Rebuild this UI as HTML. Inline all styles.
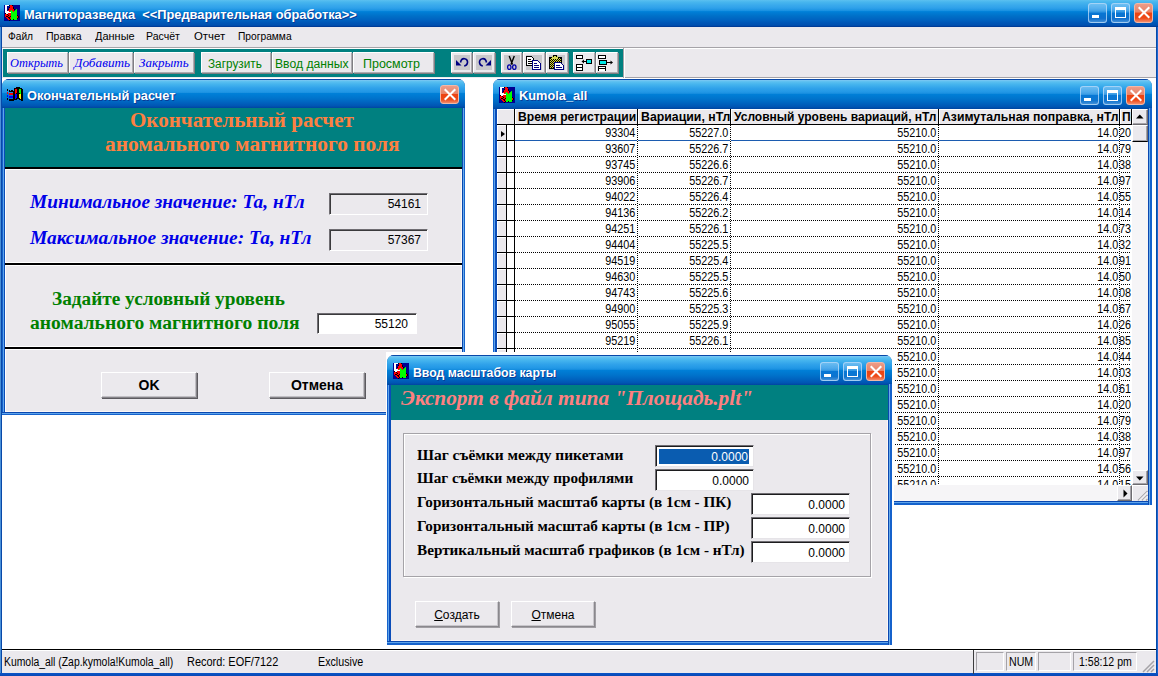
<!DOCTYPE html>
<html lang="ru">
<head>
<meta charset="utf-8">
<title>Магниторазведка</title>
<style>
*{box-sizing:border-box;margin:0;padding:0}
html,body{width:1158px;height:676px;overflow:hidden;background:#fff}
body{position:relative;font-family:"Liberation Sans",sans-serif;font-size:11px;color:#000}
.abs{position:absolute}
.tb{position:absolute;background:linear-gradient(#0848a8 0,#0848a8 3.300%,#7cc8f4 3.400%,#6cc4f2 6.600%,#5bc0f0 9%,#45b4ee 18%,#30a2ea 31%,#2298e6 43%,#1a90e0 48%,#0080d8 50%,#0074cc 66%,#0064c0 80%,#0056b4 92%,#004ca8 97%,#0044a0 100%)}
.tb.main{background:linear-gradient(#5bc0f0 0,#48b6ee 7.400%,#3aaaec 18.500%,#2ea0ea 30%,#1a92e2 39%,#0080d8 43%,#0070c8 59%,#0062c0 74%,#0056b6 85%,#0050b0 94%,#003c98 96.500%,#003c98 100%)}
.cap{position:absolute;color:#fff;font-weight:bold;font-size:13px;white-space:nowrap;text-shadow:1px 1px 0 #0a3c96;transform-origin:0 0;line-height:16px}
.wbtn{position:absolute;width:19px;height:19px;border:1px solid rgba(190,222,250,.75);border-radius:3px;background:linear-gradient(rgba(150,205,245,.55) 0,rgba(110,180,240,.45) 45%,rgba(20,110,215,.35) 50%,rgba(40,130,225,.35) 80%,rgba(120,185,240,.55) 100%)}
.wbtn.x{background:linear-gradient(#ec9c88 0,#e88468 45%,#ec4312 50%,#ee4a18 78%,#f28a6a 100%);border-color:#f3b8a6}
.wbtn.min:after{content:"";position:absolute;left:3px;top:11px;width:7px;height:3px;background:#fff}
.wbtn.max:after{content:"";box-sizing:border-box;position:absolute;left:3px;top:3px;width:11px;height:11px;border:1px solid #fff;border-top-width:3px}
.wbtn.x:before,.wbtn.x:after{content:"";position:absolute;left:7.500px;top:1px;width:2px;height:15px;background:#fff;transform:rotate(45deg)}
.wbtn.x:after{transform:rotate(-45deg)}
.gray{background:#ebe9ed}
#menu span{position:absolute;top:0;transform-origin:0 0;line-height:19px;font-size:11px;white-space:nowrap}

.tbtn{position:absolute;top:3px;height:21px;background:#ebe9ed;border-top:1px solid #fff;border-left:1px solid #fff;border-right:1px solid #aeacb1;border-bottom:1px solid #aeacb1;box-shadow:1px 1px 0 #807e83;white-space:nowrap;text-align:center;line-height:19px}
.tbtn.it{font-family:"Liberation Serif",serif;font-style:italic;font-size:13px;color:#0000f0}
.tbtn.gr{font-size:12px;color:#008000}
.tbtn i{position:absolute;left:2px;top:2px;width:16px;height:15px;background:#c9c8cb}
.tbtn svg{position:absolute;left:2px;top:1px}

.win{position:absolute;background:#0850b0;border-radius:7px 7px 0 0}
.win:before{content:"";position:absolute;left:0;top:29px;bottom:0;width:3px;background:linear-gradient(90deg,#1562cc 0 1px,#5fa4ea 1px 2px,#0a4cb8 2px 3px)}
.win:after{content:"";position:absolute;right:0;top:29px;bottom:0;width:3px;background:linear-gradient(90deg,#0a48b0 0 1px,#68abea 1px 2px,#1562cc 2px 3px)}
.win .bb{position:absolute;left:0;right:0;bottom:0;height:3px;background:linear-gradient(#0a48b0 0 1px,#5fa4ea 1px 2px,#1562cc 2px 3px)}
.win.w4:before{width:4px;background:linear-gradient(90deg,#1562cc 0 1px,#5fa4ea 1px 2.500px,#0a4cb8 2.500px 4px)}
.win.w4:after{width:4px;background:linear-gradient(90deg,#0a48b0 0 1px,#68abea 1px 2.500px,#1562cc 2.500px 4px)}
.win.w4 .bb{height:4px;background:linear-gradient(#0a48b0 0 1px,#5fa4ea 1px 2.500px,#1562cc 2.500px 4px)}
.win .tb{left:0;top:0;right:0;width:auto;border-radius:7px 7px 0 0}
.hl{position:absolute;left:0;width:457px;height:4px;background:#000;border-top:1px solid #fff;border-bottom:1px solid #fff}
.ser{font-family:"Liberation Serif",serif;font-weight:bold;position:absolute;white-space:nowrap;transform-origin:0 0}
.fld{position:absolute;border:1px solid;border-color:#6f6d72 #fff #fff #6f6d72;box-shadow:inset 1px 1px 0 #3a3a3c;font-size:12px;text-align:right;line-height:20px;padding-right:6px}
.pbtn{position:absolute;background:#ebe9ed;border:1px solid;border-color:#fff #858388 #858388 #fff;box-shadow:inset -1px -1px 0 #c0bec3,1px 1px 0 #5c5a5f;text-align:center;white-space:nowrap}

#grid{position:absolute;left:4px;top:30px;width:651px;height:392px;background:#fff;overflow:hidden}
#grid .hd{position:absolute;top:0;height:15px;background:#ebe9ed;border-top:1px solid #fff;border-left:1px solid #fff;font-weight:bold;font-size:12px;line-height:14px;white-space:nowrap;overflow:hidden}
#grid .hd span{display:inline-block;transform-origin:0 0;padding-left:2px}
#grid .vl{position:absolute;top:0;width:1px;height:15px;background:#000}
#grid .dv{position:absolute;top:16px;width:1px;height:361px;background:repeating-linear-gradient(#000 0 1px,#fff 1px 2px)}
#grid .r{position:absolute;left:18px;width:616px;height:16px;background:repeating-linear-gradient(90deg,#000 0 1px,#fff 1px 2px) left bottom/100% 1px no-repeat}
#grid .r b{position:absolute;top:0;font-weight:normal;font-size:12px;line-height:16px;text-align:right;white-space:nowrap;transform:scaleX(.9);transform-origin:100% 0}
#grid .sel{position:absolute;left:0;width:9px;height:15px;background:#ebe9ed;border-top:1px solid #fff;border-left:1px solid #fff}
.sb{position:absolute;background:#ebe9ed;border:1px solid;border-color:#fff #6d6b70 #6d6b70 #fff;box-shadow:inset -1px -1px 0 #a5a3a8}
.trk{position:absolute;background:#f6f5f7}

.lb{position:absolute;font-family:"Liberation Serif",serif;font-weight:bold;font-size:15.200px;line-height:18px;white-space:nowrap;transform-origin:0 0}
.ef{position:absolute;width:99px;height:22px;background:#fff;border:1px solid;border-color:#6f6d72 #e6e4e8 #e6e4e8 #6f6d72;box-shadow:inset 1px 1px 0 #1c1c1e;font-size:12px;text-align:right;line-height:23px;padding-right:4px}
.sp{position:absolute;top:1px;height:19px;border:1px solid;border-color:#a5a3a8 #fff #fff #a5a3a8}
#status span{position:absolute;top:4px;font-size:12px;line-height:15px;white-space:nowrap;transform-origin:0 0}
.pbtn.sm{border-color:#fff #8a888d #8a888d #fff;box-shadow:inset -1px -1px 0 #c8c6cb,1px 1px 0 #a09ea3}
</style>
</head>
<body>

<!-- ============ MAIN WINDOW FRAME ============ -->
<div class="tb main" style="left:0;top:0;width:1158px;height:27px"></div>
<div class="abs" style="left:0;top:27px;width:2px;height:649px;background:linear-gradient(90deg,#4a90d8 0 1px,#0848a8 1px 2px)"></div>
<div class="abs" style="left:1156px;top:27px;width:2px;height:649px;background:linear-gradient(90deg,#0848a8 0 1px,#1a68d0 1px 2px)"></div>
<div class="abs" style="left:0;top:673px;width:1158px;height:3px;background:linear-gradient(#0a55c8,#0a48b4)"></div>
<div id="mainicon" class="abs" style="left:4px;top:5px;width:16px;height:16px"><svg width="16" height="16" viewBox="0 0 16 16" shape-rendering="crispEdges" style="display:block"><rect width="16" height="16" fill="#000090"/><rect x="1" y="0" width="4" height="1" fill="#fff"/><rect x="5" y="0" width="1" height="1" fill="#000"/><rect x="6" y="0" width="2" height="1" fill="#f00"/><rect x="8" y="0" width="1" height="1" fill="#000"/><rect x="1" y="1" width="2" height="1" fill="#fff"/><rect x="6" y="1" width="3" height="1" fill="#f00"/><rect x="1" y="2" width="2" height="1" fill="#fff"/><rect x="5" y="2" width="1" height="1" fill="#000"/><rect x="6" y="2" width="3" height="1" fill="#f00"/><rect x="9" y="2" width="1" height="1" fill="#000"/><rect x="1" y="3" width="2" height="1" fill="#fff"/><rect x="5" y="3" width="4" height="1" fill="#f00"/><rect x="9" y="3" width="1" height="1" fill="#000"/><rect x="1" y="4" width="2" height="1" fill="#fff"/><rect x="4" y="4" width="1" height="1" fill="#000"/><rect x="5" y="4" width="5" height="1" fill="#f00"/><rect x="10" y="4" width="1" height="1" fill="#000"/><rect x="12" y="4" width="1" height="1" fill="#0f0"/><rect x="1" y="5" width="2" height="1" fill="#fff"/><rect x="4" y="5" width="3" height="1" fill="#f00"/><rect x="7" y="5" width="1" height="1" fill="#0f0"/><rect x="8" y="5" width="2" height="1" fill="#f00"/><rect x="11" y="5" width="2" height="1" fill="#0f0"/><rect x="1" y="6" width="4" height="1" fill="#fff"/><rect x="5" y="6" width="1" height="1" fill="#f00"/><rect x="6" y="6" width="3" height="1" fill="#0f0"/><rect x="9" y="6" width="1" height="1" fill="#f00"/><rect x="10" y="6" width="3" height="1" fill="#0f0"/><rect x="1" y="7" width="6" height="1" fill="#fff"/><rect x="7" y="7" width="6" height="1" fill="#0f0"/><rect x="1" y="8" width="1" height="1" fill="#000"/><rect x="2" y="8" width="2" height="1" fill="#fff"/><rect x="4" y="8" width="3" height="1" fill="#f00"/><rect x="7" y="8" width="6" height="1" fill="#0f0"/><rect x="1" y="9" width="2" height="1" fill="#f00"/><rect x="3" y="9" width="1" height="1" fill="#000"/><rect x="4" y="9" width="3" height="1" fill="#f00"/><rect x="7" y="9" width="6" height="1" fill="#0f0"/><rect x="1" y="10" width="3" height="1" fill="#f00"/><rect x="4" y="10" width="1" height="1" fill="#000"/><rect x="5" y="10" width="2" height="1" fill="#f00"/><rect x="7" y="10" width="6" height="1" fill="#0f0"/><rect x="13" y="10" width="1" height="1" fill="#000"/><rect x="1" y="11" width="1" height="1" fill="#f00"/><rect x="2" y="11" width="2" height="1" fill="#000"/><rect x="4" y="11" width="2" height="1" fill="#f00"/><rect x="6" y="11" width="1" height="1" fill="#000"/><rect x="7" y="11" width="6" height="1" fill="#0f0"/><rect x="13" y="11" width="1" height="1" fill="#f00"/><rect x="14" y="11" width="1" height="1" fill="#000"/><rect x="2" y="12" width="2" height="1" fill="#f00"/><rect x="4" y="12" width="2" height="1" fill="#000"/><rect x="6" y="12" width="1" height="1" fill="#f00"/><rect x="7" y="12" width="6" height="1" fill="#0f0"/><rect x="13" y="12" width="1" height="1" fill="#f00"/><rect x="14" y="12" width="1" height="1" fill="#000"/><rect x="3" y="13" width="2" height="1" fill="#f00"/><rect x="5" y="13" width="1" height="1" fill="#000"/><rect x="6" y="13" width="1" height="1" fill="#f00"/><rect x="7" y="13" width="6" height="1" fill="#0f0"/><rect x="13" y="13" width="1" height="1" fill="#000"/><rect x="4" y="14" width="2" height="1" fill="#f00"/><rect x="6" y="14" width="1" height="1" fill="#000"/><rect x="7" y="14" width="2" height="1" fill="#0f0"/><rect x="9" y="14" width="1" height="1" fill="#000"/><rect x="10" y="14" width="3" height="1" fill="#0f0"/><rect x="5" y="15" width="1" height="1" fill="#000"/></svg></div>
<div class="cap" style="left:24px;top:7px;transform:scaleX(.988)" id="cap-main">Магниторазведка&nbsp; &lt;&lt;Предварительная обработка&gt;&gt;</div>
<div class="wbtn min" style="left:1088px;top:3px;height:20px" id="m-min"></div>
<div class="wbtn max" style="left:1111px;top:3px;height:20px" id="m-max"></div>
<div class="wbtn x" style="left:1134px;top:3px;height:20px" id="m-cls"></div>

<!-- menu bar -->
<div id="menu" class="abs gray" style="left:2px;top:27px;width:1154px;height:20px">
<span id="m1" style="left:6px;top:0px;transform:scaleX(0.9259);transform-origin:0 0">Файл</span><span id="m2" style="left:43.5px;top:0px;transform:scaleX(0.9600);transform-origin:0 0">Правка</span><span id="m3" style="left:93px;top:0px;transform:scaleX(0.9977);transform-origin:0 0">Данные</span><span id="m4" style="left:144.4px;top:0px;transform:scaleX(0.9604);transform-origin:0 0">Расчёт</span><span id="m5" style="left:191.7px;top:0px;transform:scaleX(1.0333);transform-origin:0 0">Отчет</span><span id="m6" style="left:235.5px;top:0px;transform:scaleX(0.9294);transform-origin:0 0">Программа</span>
</div>
<div class="abs" style="left:2px;top:47px;width:1154px;height:1px;background:#a5a3a8"></div>
<div class="abs" style="left:2px;top:48px;width:1154px;height:1px;background:#fff"></div>
<!-- toolbar strip -->
<div class="abs gray" style="left:2px;top:49px;width:1154px;height:29px"></div>
<div id="toolbar" class="abs" style="left:3px;top:49px;width:620px;height:28px;background:#008080">
<div class="tbtn it" style="left:4px;width:61px"><span id="t1" style="position:absolute;left:1.6px;top:0px;transform:scaleX(0.9530);transform-origin:0 0">Открыть</span></div>
<div class="tbtn it" style="left:66px;width:64px"><span id="t2" style="position:absolute;left:3.5px;top:0px;transform:scaleX(1.0179);transform-origin:0 0">Добавить</span></div>
<div class="tbtn it" style="left:131px;width:60px"><span id="t3" style="position:absolute;left:4px;top:0px;transform:scaleX(0.9981);transform-origin:0 0">Закрыть</span></div>
<div class="tbtn gr" style="left:198px;width:70px"><span id="t4" style="position:absolute;left:6px;top:1.700px;transform:scaleX(0.9818);transform-origin:0 0">Загрузить</span></div>
<div class="tbtn gr" style="left:269px;width:80px"><span id="t5" style="position:absolute;left:2.1px;top:1.700px;transform:scaleX(1.0127);transform-origin:0 0">Ввод данных</span></div>
<div class="tbtn gr" style="left:350px;width:81px"><span id="t6" style="position:absolute;left:9.4px;top:1.700px;transform:scaleX(1.0407);transform-origin:0 0">Просмотр</span></div>
<div class="tbtn" style="left:448px;width:21px"><i></i><svg width="16" height="16" viewBox="0 0 16 16"><path d="M2 6v5.500h5.500z" fill="#000080"/><path d="M6.500 8.500c.5-2.500 2-4 4-3.800c2 .2 3.200 2 3 4c-.2 1.800-1.300 3-3.300 3.300" fill="none" stroke="#000080" stroke-width="1.600"/></svg></div>
<div class="tbtn" style="left:470px;width:22px"><i></i><svg style="left:3px" width="16" height="16" viewBox="0 0 16 16"><path d="M14 6v5.500h-5.500z" fill="#000080"/><path d="M9.500 8.500c-.5-2.500-2-4-4-3.800c-2 .2-3.200 2-3 4c.2 1.800 1.300 3 3.300 3.300" fill="none" stroke="#000080" stroke-width="1.600"/></svg></div>
<div class="tbtn" style="left:498px;width:21px"><i></i><svg width="16" height="16" viewBox="0 0 16 16"><path d="M5.200 2l3.300 8.500M10.300 2l-3.300 8.500" stroke="#000" stroke-width="1.400" fill="none"/><ellipse cx="5.300" cy="13.200" rx="1.700" ry="2.300" fill="none" stroke="#0000a8" stroke-width="1.300"/><ellipse cx="10.300" cy="13.200" rx="1.700" ry="2.300" fill="none" stroke="#0000a8" stroke-width="1.300"/></svg></div>
<div class="tbtn" style="left:520px;width:22px"><i></i><svg width="16" height="16" viewBox="0 0 16 16" shape-rendering="crispEdges"><path d="M0.500 2.500h5l2 2v7h-7z" fill="#fff" stroke="#000"/><path d="M2 5.500h3M2 7.500h4M2 9.500h4" stroke="#000"/><path d="M6.500 6.500h5l3 3v6h-8z" fill="#fff" stroke="#000080"/><path d="M8 9.500h3M8 11.500h5M8 13.500h5" stroke="#000080"/></svg></div>
<div class="tbtn" style="left:543px;width:22px"><i></i><svg width="16" height="16" viewBox="0 0 16 16" shape-rendering="crispEdges"><defs><pattern id="dth" width="2" height="2" patternUnits="userSpaceOnUse"><rect width="2" height="2" fill="#000"/><rect width="1" height="1" fill="#d8d838"/><rect x="1" y="1" width="1" height="1" fill="#d8d838"/></pattern></defs><rect x="0" y="3" width="13" height="12" fill="#000"/><rect x="1" y="4" width="11" height="10" fill="url(#dth)"/><rect x="3" y="2" width="6" height="3" fill="#d8d858"/><rect x="4" y="1" width="4" height="2" fill="#000"/><rect x="5" y="2" width="2" height="1" fill="#d8d858"/><path d="M5.500 8.500h6l3 3v4h-9z" fill="#fff" stroke="#000080"/><path d="M7 11.500h4M7 13.500h6" stroke="#000080"/></svg></div>
<div class="tbtn" style="left:570px;width:22px"><svg style="left:0;top:0" width="19" height="19" viewBox="0 0 19 19" shape-rendering="crispEdges"><rect x="2.500" y="2.500" width="6" height="3" fill="#fff" stroke="#000"/><rect x="2.500" y="11.500" width="6" height="6" fill="#fff" stroke="#000"/><path d="M3 14.500h5" stroke="#000"/><rect x="12.500" y="6.500" width="5" height="4" fill="#00e8e8" stroke="#000"/><path d="M9 8.500h4" stroke="#000"/><path d="M7.500 8.500l2.500-2v4z" fill="#000" shape-rendering="auto"/></svg></div>
<div class="tbtn" style="left:593px;width:22px"><svg style="left:0;top:0" width="19" height="19" viewBox="0 0 19 19" shape-rendering="crispEdges"><rect x="1.500" y="2.500" width="7" height="3" fill="#fff" stroke="#000"/><path d="M1.500 17.500v-4h7v4" fill="#fff" stroke="#000"/><path d="M2 15.500h6" stroke="#000"/><rect x="2.500" y="7.500" width="7" height="4" fill="#00e8e8" stroke="#000"/><path d="M10 9.500h4" stroke="#000"/><path d="M16 9.500l-2.500-2v4z" fill="#000" shape-rendering="auto"/></svg></div>
</div>
<div class="abs" style="left:2px;top:78px;width:1154px;height:1px;background:#fff"></div>
<div class="abs" style="left:625px;top:77px;width:531px;height:1px;background:#a5a3a8"></div>
<div class="abs" style="left:623px;top:48px;width:1px;height:30px;background:#a5a3a8"></div>
<div class="abs" style="left:624px;top:48px;width:1px;height:30px;background:#fff"></div>


<!-- ============ LEFT DIALOG: Окончательный расчет ============ -->
<div class="win" id="w1" style="left:2px;top:79px;width:463px;height:336px"><div class="bb"></div>
 <div class="tb" style="height:29px"></div>
 <div id="ic1" class="abs" style="left:5px;top:8px;width:16px;height:14px"><svg width="16" height="14" viewBox="0 0 16 14" shape-rendering="crispEdges" style="display:block"><rect x="9" y="0" width="4" height="1" fill="#000"/><rect x="7" y="1" width="8" height="1" fill="#000"/><rect x="0" y="2" width="1" height="1" fill="#000"/><rect x="7" y="2" width="1" height="1" fill="#000"/><rect x="8" y="2" width="2" height="1" fill="#f00"/><rect x="10" y="2" width="2" height="1" fill="#000"/><rect x="12" y="2" width="2" height="1" fill="#0f0"/><rect x="14" y="2" width="2" height="1" fill="#000"/><rect x="0" y="3" width="1" height="1" fill="#000"/><rect x="2" y="3" width="1" height="1" fill="#000"/><rect x="4" y="3" width="2" height="1" fill="#000"/><rect x="7" y="3" width="1" height="1" fill="#000"/><rect x="8" y="3" width="2" height="1" fill="#f00"/><rect x="10" y="3" width="2" height="1" fill="#000"/><rect x="12" y="3" width="2" height="1" fill="#0f0"/><rect x="14" y="3" width="2" height="1" fill="#000"/><rect x="2" y="4" width="6" height="1" fill="#000"/><rect x="8" y="4" width="2" height="1" fill="#f00"/><rect x="10" y="4" width="2" height="1" fill="#000"/><rect x="12" y="4" width="2" height="1" fill="#0f0"/><rect x="14" y="4" width="2" height="1" fill="#000"/><rect x="0" y="5" width="1" height="1" fill="#f00"/><rect x="6" y="5" width="2" height="1" fill="#000"/><rect x="8" y="5" width="2" height="1" fill="#f00"/><rect x="10" y="5" width="2" height="1" fill="#000"/><rect x="12" y="5" width="2" height="1" fill="#0f0"/><rect x="14" y="5" width="2" height="1" fill="#000"/><rect x="0" y="6" width="1" height="1" fill="#f00"/><rect x="2" y="6" width="4" height="1" fill="#f00"/><rect x="6" y="6" width="2" height="1" fill="#000"/><rect x="8" y="6" width="1" height="1" fill="#f00"/><rect x="9" y="6" width="4" height="1" fill="#000"/><rect x="13" y="6" width="1" height="1" fill="#0f0"/><rect x="14" y="6" width="2" height="1" fill="#000"/><rect x="2" y="7" width="4" height="1" fill="#f00"/><rect x="6" y="7" width="2" height="1" fill="#000"/><rect x="8" y="7" width="2" height="1" fill="#00f"/><rect x="10" y="7" width="2" height="1" fill="#000"/><rect x="12" y="7" width="2" height="1" fill="#ff0"/><rect x="14" y="7" width="2" height="1" fill="#000"/><rect x="0" y="8" width="1" height="1" fill="#00f"/><rect x="6" y="8" width="2" height="1" fill="#000"/><rect x="8" y="8" width="2" height="1" fill="#00f"/><rect x="10" y="8" width="2" height="1" fill="#000"/><rect x="12" y="8" width="2" height="1" fill="#ff0"/><rect x="14" y="8" width="2" height="1" fill="#000"/><rect x="0" y="9" width="1" height="1" fill="#00f"/><rect x="2" y="9" width="4" height="1" fill="#00f"/><rect x="6" y="9" width="2" height="1" fill="#000"/><rect x="8" y="9" width="2" height="1" fill="#00f"/><rect x="10" y="9" width="2" height="1" fill="#000"/><rect x="12" y="9" width="2" height="1" fill="#ff0"/><rect x="14" y="9" width="2" height="1" fill="#000"/><rect x="2" y="10" width="4" height="1" fill="#00f"/><rect x="6" y="10" width="2" height="1" fill="#000"/><rect x="8" y="10" width="2" height="1" fill="#00f"/><rect x="10" y="10" width="2" height="1" fill="#000"/><rect x="12" y="10" width="2" height="1" fill="#ff0"/><rect x="14" y="10" width="2" height="1" fill="#000"/><rect x="0" y="11" width="1" height="1" fill="#000"/><rect x="6" y="11" width="2" height="1" fill="#000"/><rect x="8" y="11" width="1" height="1" fill="#00f"/><rect x="9" y="11" width="4" height="1" fill="#000"/><rect x="13" y="11" width="1" height="1" fill="#ff0"/><rect x="14" y="11" width="2" height="1" fill="#000"/><rect x="0" y="12" width="1" height="1" fill="#000"/><rect x="2" y="12" width="8" height="1" fill="#000"/><rect x="12" y="12" width="4" height="1" fill="#000"/><rect x="2" y="13" width="5" height="1" fill="#000"/><rect x="14" y="13" width="2" height="1" fill="#000"/></svg></div>
 <div class="cap" style="left:25px;top:8.5px;transform:scaleX(0.9868);transform-origin:0 0" id="cap1">Окончательный расчет</div>
 <div class="wbtn x" style="left:438px;top:6px"></div>
 <div class="abs gray" style="left:3px;top:29px;width:457px;height:304px;box-shadow:inset 1px 0 0 #fff,inset -1px -1px 0 #fbf7f7">
  <div class="abs" style="left:0;top:0;width:457px;height:59px;background:#008080"></div>
  <div class="ser" style="left:124.6px;top:-0.5px;font-size:21.330px;line-height:25px;color:#ff8040;transform:scaleX(0.9863);transform-origin:0 0" id="o1">Окончательный расчет</div>
  <div class="ser" style="left:99.5px;top:23.5px;font-size:21.330px;line-height:25px;color:#ff8040;transform:scaleX(1.0021);transform-origin:0 0" id="o2">аномального магнитного поля</div>
  <div class="hl" style="top:58px;border-top-color:#008080"></div>
  <div class="ser" style="left:24.6px;top:83px;font-size:18.670px;font-style:italic;line-height:22px;color:#0000e8;transform:scaleX(1.0353);transform-origin:0 0" id="b1">Минимальное значение: Та, нТл</div>
  <div class="ser" style="left:24.6px;top:119px;font-size:18.670px;font-style:italic;line-height:22px;color:#0000e8;transform:scaleX(1.0402);transform-origin:0 0" id="b2">Максимальное значение: Та, нТл</div>
  <div class="fld" style="left:324px;top:85px;width:99px;height:22px">54161</div>
  <div class="fld" style="left:324px;top:121px;width:99px;height:22px">57367</div>
  <div class="hl" style="top:154px"></div>
  <div class="ser" style="left:47.2px;top:179px;font-size:18.670px;line-height:23px;color:#008000;transform:scaleX(1.0324);transform-origin:0 0" id="g1">Задайте условный уровень</div>
  <div class="ser" style="left:24.8px;top:203px;font-size:18.670px;line-height:23px;color:#008000;transform:scaleX(1.0486);transform-origin:0 0" id="g2">аномального магнитного поля</div>
  <div class="fld" style="left:312px;top:205px;width:100px;height:21px;background:#fff;padding-right:8px">55120</div>
  <div class="hl" style="top:238px"></div>
  <div class="pbtn" style="left:96px;top:264px;width:96px;height:26px;font-weight:bold;font-size:14px;line-height:24px">OK</div>
  <div class="pbtn" style="left:264px;top:264px;width:96px;height:26px;font-weight:bold;font-size:14px;line-height:24px">Отмена</div>
 </div>
</div>


<!-- ============ GRID WINDOW: Kumola_all ============ -->
<div class="win w4" id="w2" style="left:493px;top:79px;width:659px;height:426px"><div class="bb"></div>
 <div class="tb" style="height:30px"></div>
 <div id="ic2" class="abs" style="left:6px;top:8px;width:16px;height:16px"><svg width="16" height="16" viewBox="0 0 16 16" shape-rendering="crispEdges" style="display:block"><rect width="16" height="16" fill="#000090"/><rect x="1" y="0" width="4" height="1" fill="#fff"/><rect x="5" y="0" width="1" height="1" fill="#000"/><rect x="6" y="0" width="2" height="1" fill="#f00"/><rect x="8" y="0" width="1" height="1" fill="#000"/><rect x="1" y="1" width="2" height="1" fill="#fff"/><rect x="6" y="1" width="3" height="1" fill="#f00"/><rect x="1" y="2" width="2" height="1" fill="#fff"/><rect x="5" y="2" width="1" height="1" fill="#000"/><rect x="6" y="2" width="3" height="1" fill="#f00"/><rect x="9" y="2" width="1" height="1" fill="#000"/><rect x="1" y="3" width="2" height="1" fill="#fff"/><rect x="5" y="3" width="4" height="1" fill="#f00"/><rect x="9" y="3" width="1" height="1" fill="#000"/><rect x="1" y="4" width="2" height="1" fill="#fff"/><rect x="4" y="4" width="1" height="1" fill="#000"/><rect x="5" y="4" width="5" height="1" fill="#f00"/><rect x="10" y="4" width="1" height="1" fill="#000"/><rect x="12" y="4" width="1" height="1" fill="#0f0"/><rect x="1" y="5" width="2" height="1" fill="#fff"/><rect x="4" y="5" width="3" height="1" fill="#f00"/><rect x="7" y="5" width="1" height="1" fill="#0f0"/><rect x="8" y="5" width="2" height="1" fill="#f00"/><rect x="11" y="5" width="2" height="1" fill="#0f0"/><rect x="1" y="6" width="4" height="1" fill="#fff"/><rect x="5" y="6" width="1" height="1" fill="#f00"/><rect x="6" y="6" width="3" height="1" fill="#0f0"/><rect x="9" y="6" width="1" height="1" fill="#f00"/><rect x="10" y="6" width="3" height="1" fill="#0f0"/><rect x="1" y="7" width="6" height="1" fill="#fff"/><rect x="7" y="7" width="6" height="1" fill="#0f0"/><rect x="1" y="8" width="1" height="1" fill="#000"/><rect x="2" y="8" width="2" height="1" fill="#fff"/><rect x="4" y="8" width="3" height="1" fill="#f00"/><rect x="7" y="8" width="6" height="1" fill="#0f0"/><rect x="1" y="9" width="2" height="1" fill="#f00"/><rect x="3" y="9" width="1" height="1" fill="#000"/><rect x="4" y="9" width="3" height="1" fill="#f00"/><rect x="7" y="9" width="6" height="1" fill="#0f0"/><rect x="1" y="10" width="3" height="1" fill="#f00"/><rect x="4" y="10" width="1" height="1" fill="#000"/><rect x="5" y="10" width="2" height="1" fill="#f00"/><rect x="7" y="10" width="6" height="1" fill="#0f0"/><rect x="13" y="10" width="1" height="1" fill="#000"/><rect x="1" y="11" width="1" height="1" fill="#f00"/><rect x="2" y="11" width="2" height="1" fill="#000"/><rect x="4" y="11" width="2" height="1" fill="#f00"/><rect x="6" y="11" width="1" height="1" fill="#000"/><rect x="7" y="11" width="6" height="1" fill="#0f0"/><rect x="13" y="11" width="1" height="1" fill="#f00"/><rect x="14" y="11" width="1" height="1" fill="#000"/><rect x="2" y="12" width="2" height="1" fill="#f00"/><rect x="4" y="12" width="2" height="1" fill="#000"/><rect x="6" y="12" width="1" height="1" fill="#f00"/><rect x="7" y="12" width="6" height="1" fill="#0f0"/><rect x="13" y="12" width="1" height="1" fill="#f00"/><rect x="14" y="12" width="1" height="1" fill="#000"/><rect x="3" y="13" width="2" height="1" fill="#f00"/><rect x="5" y="13" width="1" height="1" fill="#000"/><rect x="6" y="13" width="1" height="1" fill="#f00"/><rect x="7" y="13" width="6" height="1" fill="#0f0"/><rect x="13" y="13" width="1" height="1" fill="#000"/><rect x="4" y="14" width="2" height="1" fill="#f00"/><rect x="6" y="14" width="1" height="1" fill="#000"/><rect x="7" y="14" width="2" height="1" fill="#0f0"/><rect x="9" y="14" width="1" height="1" fill="#000"/><rect x="10" y="14" width="3" height="1" fill="#0f0"/><rect x="5" y="15" width="1" height="1" fill="#000"/></svg></div>
 <div class="cap" style="left:26.1px;top:9px;transform:scaleX(0.9842);transform-origin:0 0" id="cap2">Kumola_all</div>
 <div class="wbtn min" style="left:587px;top:7px" id="g-min"></div>
 <div class="wbtn max" style="left:610px;top:7px" id="g-max"></div>
 <div class="wbtn x" style="left:633px;top:7px" id="g-cls"></div>
 <div id="grid">
  <div class="hd" style="left:0;width:17px"></div>
  <div class="hd" style="left:18px;width:122px"><span id="h1" style=";left:-0.3px;top:0px;transform:scaleX(1.0111);transform-origin:0 0">Время регистрации</span></div>
  <div class="hd" style="left:141px;width:92px"><span id="h2" style=";left:-1.2px;top:0px;transform:scaleX(1.0253);transform-origin:0 0">Вариации, нТл</span></div>
  <div class="hd" style="left:234px;width:207px"><span id="h3">Условный уровень вариаций, нТл</span></div>
  <div class="hd" style="left:442px;width:180px"><span id="h4" style=";left:-2.4px;top:0px;transform:scaleX(1.0173);transform-origin:0 0">Азимутальная поправка, нТл</span></div>
  <div class="hd" style="left:623px;width:11px"><span id="h5" style="padding-left:1px">По</span></div>
  <div class="vl" style="left:17px;height:377px"></div><div class="vl" style="left:140px"></div><div class="vl" style="left:233px"></div><div class="vl" style="left:441px"></div><div class="vl" style="left:622px"></div><div class="vl" style="left:634px"></div>
  <div class="abs" style="left:0;top:15px;width:635px;height:1px;background:#000"></div>
  <div class="r" style="top:16px;background:linear-gradient(#1c5cb0,#1c5cb0) left bottom/100% 1px no-repeat"><b style="right:496px">93304</b><b style="right:403px">55227.0</b><b style="right:195px">55210.0</b><b style="right:13px">14.0</b><b style="left:603.500px;transform-origin:0 0">20</b></div><div class="r" style="top:32px"><b style="right:496px">93607</b><b style="right:403px">55226.7</b><b style="right:195px">55210.0</b><b style="right:13px">14.0</b><b style="left:603.500px;transform-origin:0 0">79</b></div><div class="r" style="top:48px"><b style="right:496px">93745</b><b style="right:403px">55226.6</b><b style="right:195px">55210.0</b><b style="right:13px">14.0</b><b style="left:603.500px;transform-origin:0 0">38</b></div><div class="r" style="top:64px"><b style="right:496px">93906</b><b style="right:403px">55226.7</b><b style="right:195px">55210.0</b><b style="right:13px">14.0</b><b style="left:603.500px;transform-origin:0 0">97</b></div><div class="r" style="top:80px"><b style="right:496px">94022</b><b style="right:403px">55226.4</b><b style="right:195px">55210.0</b><b style="right:13px">14.0</b><b style="left:603.500px;transform-origin:0 0">55</b></div><div class="r" style="top:96px"><b style="right:496px">94136</b><b style="right:403px">55226.2</b><b style="right:195px">55210.0</b><b style="right:13px">14.0</b><b style="left:603.500px;transform-origin:0 0">14</b></div><div class="r" style="top:112px"><b style="right:496px">94251</b><b style="right:403px">55226.1</b><b style="right:195px">55210.0</b><b style="right:13px">14.0</b><b style="left:603.500px;transform-origin:0 0">73</b></div><div class="r" style="top:128px"><b style="right:496px">94404</b><b style="right:403px">55225.5</b><b style="right:195px">55210.0</b><b style="right:13px">14.0</b><b style="left:603.500px;transform-origin:0 0">32</b></div><div class="r" style="top:144px"><b style="right:496px">94519</b><b style="right:403px">55225.4</b><b style="right:195px">55210.0</b><b style="right:13px">14.0</b><b style="left:603.500px;transform-origin:0 0">91</b></div><div class="r" style="top:160px"><b style="right:496px">94630</b><b style="right:403px">55225.5</b><b style="right:195px">55210.0</b><b style="right:13px">14.0</b><b style="left:603.500px;transform-origin:0 0">50</b></div><div class="r" style="top:176px"><b style="right:496px">94743</b><b style="right:403px">55225.6</b><b style="right:195px">55210.0</b><b style="right:13px">14.0</b><b style="left:603.500px;transform-origin:0 0">08</b></div><div class="r" style="top:192px"><b style="right:496px">94900</b><b style="right:403px">55225.3</b><b style="right:195px">55210.0</b><b style="right:13px">14.0</b><b style="left:603.500px;transform-origin:0 0">67</b></div><div class="r" style="top:208px"><b style="right:496px">95055</b><b style="right:403px">55225.9</b><b style="right:195px">55210.0</b><b style="right:13px">14.0</b><b style="left:603.500px;transform-origin:0 0">26</b></div><div class="r" style="top:224px"><b style="right:496px">95219</b><b style="right:403px">55226.1</b><b style="right:195px">55210.0</b><b style="right:13px">14.0</b><b style="left:603.500px;transform-origin:0 0">85</b></div><div class="r" style="top:240px"><b style="right:195px">55210.0</b><b style="right:13px">14.0</b><b style="left:603.500px;transform-origin:0 0">44</b></div><div class="r" style="top:256px"><b style="right:195px">55210.0</b><b style="right:13px">14.0</b><b style="left:603.500px;transform-origin:0 0">03</b></div><div class="r" style="top:272px"><b style="right:195px">55210.0</b><b style="right:13px">14.0</b><b style="left:603.500px;transform-origin:0 0">61</b></div><div class="r" style="top:288px"><b style="right:195px">55210.0</b><b style="right:13px">14.0</b><b style="left:603.500px;transform-origin:0 0">20</b></div><div class="r" style="top:304px"><b style="right:195px">55210.0</b><b style="right:13px">14.0</b><b style="left:603.500px;transform-origin:0 0">79</b></div><div class="r" style="top:320px"><b style="right:195px">55210.0</b><b style="right:13px">14.0</b><b style="left:603.500px;transform-origin:0 0">38</b></div><div class="r" style="top:336px"><b style="right:195px">55210.0</b><b style="right:13px">14.0</b><b style="left:603.500px;transform-origin:0 0">97</b></div><div class="r" style="top:352px"><b style="right:195px">55210.0</b><b style="right:13px">14.0</b><b style="left:603.500px;transform-origin:0 0">56</b></div><div class="r" style="top:368px"><b style="right:195px">55210.0</b><b style="right:13px">14.0</b><b style="left:603.500px;transform-origin:0 0">15</b></div>
  <div class="sel" style="top:16px"></div><div class="sel" style="top:32px"></div><div class="sel" style="top:48px"></div><div class="sel" style="top:64px"></div><div class="sel" style="top:80px"></div><div class="sel" style="top:96px"></div><div class="sel" style="top:112px"></div><div class="sel" style="top:128px"></div><div class="sel" style="top:144px"></div><div class="sel" style="top:160px"></div><div class="sel" style="top:176px"></div><div class="sel" style="top:192px"></div><div class="sel" style="top:208px"></div><div class="sel" style="top:224px"></div><div class="sel" style="top:240px"></div><div class="sel" style="top:256px"></div><div class="sel" style="top:272px"></div><div class="sel" style="top:288px"></div><div class="sel" style="top:304px"></div><div class="sel" style="top:320px"></div><div class="sel" style="top:336px"></div><div class="sel" style="top:352px"></div><div class="sel" style="top:368px"></div>
  <div class="abs" style="left:9px;top:16px;width:1px;height:361px;background:#000"></div>
  <div class="abs" style="left:0;top:16px;width:17px;height:361px;background:repeating-linear-gradient(transparent 0 15px,#000 15px 16px)"></div>
  <div class="abs" style="left:4px;top:22px;width:0;height:0;border-left:4px solid #000;border-top:3.500px solid transparent;border-bottom:3.500px solid transparent"></div>
  <div class="dv" style="left:140px"></div><div class="dv" style="left:233px"></div><div class="dv" style="left:441px"></div><div class="dv" style="left:622px"></div>
  <!-- vertical scrollbar -->
  <div class="trk" style="left:635px;top:0;width:16px;height:376px"></div>
  <div class="sb" style="left:635px;top:0;width:16px;height:16px" id="sb-up"><svg class="abs" style="left:3px;top:4px" width="8" height="5" viewBox="0 0 8 5"><path d="M0 4.500h7.500L3.750 0.500z" fill="#000"/></svg></div>
  <div class="sb" style="left:635px;top:16px;width:16px;height:17px;border-bottom-color:#000"></div>
  <div class="sb" style="left:635px;top:361px;width:16px;height:15px" id="sb-dn"><svg class="abs" style="left:3px;top:5px" width="8" height="5" viewBox="0 0 8 5"><path d="M0 0.500h7.500L3.750 4.500z" fill="#000"/></svg></div>
  <!-- horizontal scrollbar -->
  <div class="trk" style="left:0;top:376px;width:651px;height:16px"></div>
  <div class="sb" style="left:620px;top:376px;width:15px;height:16px" id="sb-rt"><svg class="abs" style="left:5px;top:3px" width="5" height="9" viewBox="0 0 5 9"><path d="M0.500 0.500v8L4.500 4.500z" fill="#000"/></svg></div>
  <div class="sb" style="left:635px;top:376px;width:16px;height:16px;box-shadow:none;border-right-color:#ebe9ed;border-bottom-color:#ebe9ed" id="sb-grip"><svg class="abs" style="left:3px;top:3px" width="12" height="12" viewBox="0 0 12 12"><path d="M11.500 2L2 11.500M11.500 6L6 11.500M11.500 10L10 11.500" stroke="#a5a3a8" stroke-width="1.300"/><path d="M11.500 3L3 11.500M11.500 7L7 11.500" stroke="#fff" stroke-width="1"/></svg></div>
 </div>
</div>


<!-- ============ EXPORT DIALOG: Ввод масштабов карты ============ -->
<div class="abs" style="left:386px;top:352px;width:508px;height:293px;background:#fff"></div>
<div class="win w4" id="w3" style="left:387px;top:355px;width:505px;height:290px"><div class="bb"></div>
 <div class="tb" style="height:30px"></div>
 <div id="ic3" class="abs" style="left:6px;top:8px;width:16px;height:16px"><svg width="16" height="16" viewBox="0 0 16 16" shape-rendering="crispEdges" style="display:block"><rect width="16" height="16" fill="#000090"/><rect x="1" y="0" width="4" height="1" fill="#fff"/><rect x="5" y="0" width="1" height="1" fill="#000"/><rect x="6" y="0" width="2" height="1" fill="#f00"/><rect x="8" y="0" width="1" height="1" fill="#000"/><rect x="1" y="1" width="2" height="1" fill="#fff"/><rect x="6" y="1" width="3" height="1" fill="#f00"/><rect x="1" y="2" width="2" height="1" fill="#fff"/><rect x="5" y="2" width="1" height="1" fill="#000"/><rect x="6" y="2" width="3" height="1" fill="#f00"/><rect x="9" y="2" width="1" height="1" fill="#000"/><rect x="1" y="3" width="2" height="1" fill="#fff"/><rect x="5" y="3" width="4" height="1" fill="#f00"/><rect x="9" y="3" width="1" height="1" fill="#000"/><rect x="1" y="4" width="2" height="1" fill="#fff"/><rect x="4" y="4" width="1" height="1" fill="#000"/><rect x="5" y="4" width="5" height="1" fill="#f00"/><rect x="10" y="4" width="1" height="1" fill="#000"/><rect x="12" y="4" width="1" height="1" fill="#0f0"/><rect x="1" y="5" width="2" height="1" fill="#fff"/><rect x="4" y="5" width="3" height="1" fill="#f00"/><rect x="7" y="5" width="1" height="1" fill="#0f0"/><rect x="8" y="5" width="2" height="1" fill="#f00"/><rect x="11" y="5" width="2" height="1" fill="#0f0"/><rect x="1" y="6" width="4" height="1" fill="#fff"/><rect x="5" y="6" width="1" height="1" fill="#f00"/><rect x="6" y="6" width="3" height="1" fill="#0f0"/><rect x="9" y="6" width="1" height="1" fill="#f00"/><rect x="10" y="6" width="3" height="1" fill="#0f0"/><rect x="1" y="7" width="6" height="1" fill="#fff"/><rect x="7" y="7" width="6" height="1" fill="#0f0"/><rect x="1" y="8" width="1" height="1" fill="#000"/><rect x="2" y="8" width="2" height="1" fill="#fff"/><rect x="4" y="8" width="3" height="1" fill="#f00"/><rect x="7" y="8" width="6" height="1" fill="#0f0"/><rect x="1" y="9" width="2" height="1" fill="#f00"/><rect x="3" y="9" width="1" height="1" fill="#000"/><rect x="4" y="9" width="3" height="1" fill="#f00"/><rect x="7" y="9" width="6" height="1" fill="#0f0"/><rect x="1" y="10" width="3" height="1" fill="#f00"/><rect x="4" y="10" width="1" height="1" fill="#000"/><rect x="5" y="10" width="2" height="1" fill="#f00"/><rect x="7" y="10" width="6" height="1" fill="#0f0"/><rect x="13" y="10" width="1" height="1" fill="#000"/><rect x="1" y="11" width="1" height="1" fill="#f00"/><rect x="2" y="11" width="2" height="1" fill="#000"/><rect x="4" y="11" width="2" height="1" fill="#f00"/><rect x="6" y="11" width="1" height="1" fill="#000"/><rect x="7" y="11" width="6" height="1" fill="#0f0"/><rect x="13" y="11" width="1" height="1" fill="#f00"/><rect x="14" y="11" width="1" height="1" fill="#000"/><rect x="2" y="12" width="2" height="1" fill="#f00"/><rect x="4" y="12" width="2" height="1" fill="#000"/><rect x="6" y="12" width="1" height="1" fill="#f00"/><rect x="7" y="12" width="6" height="1" fill="#0f0"/><rect x="13" y="12" width="1" height="1" fill="#f00"/><rect x="14" y="12" width="1" height="1" fill="#000"/><rect x="3" y="13" width="2" height="1" fill="#f00"/><rect x="5" y="13" width="1" height="1" fill="#000"/><rect x="6" y="13" width="1" height="1" fill="#f00"/><rect x="7" y="13" width="6" height="1" fill="#0f0"/><rect x="13" y="13" width="1" height="1" fill="#000"/><rect x="4" y="14" width="2" height="1" fill="#f00"/><rect x="6" y="14" width="1" height="1" fill="#000"/><rect x="7" y="14" width="2" height="1" fill="#0f0"/><rect x="9" y="14" width="1" height="1" fill="#000"/><rect x="10" y="14" width="3" height="1" fill="#0f0"/><rect x="5" y="15" width="1" height="1" fill="#000"/></svg></div>
 <div class="cap" style="left:26px;top:9.500px;transform:scaleX(0.9441);transform-origin:0 0" id="cap3">Ввод масштабов карты</div>
 <div class="wbtn min" style="left:433px;top:7px" id="e-min"></div>
 <div class="wbtn max" style="left:456px;top:7px" id="e-max"></div>
 <div class="wbtn x" style="left:479px;top:7px" id="e-cls"></div>
 <div class="abs gray" style="left:4px;top:30px;width:497px;height:256px;box-shadow:inset -1px -1px 0 #fbf7f7">
  <div class="abs" style="left:0;top:0;width:497px;height:35px;background:#008080"></div>
  <div class="ser" style="left:10px;top:0;font-size:21.330px;font-style:italic;line-height:26px;color:#ff8080" id="p1">Экспорт в файл типа "Площадь.plt"</div>
  <div class="abs" style="left:12px;top:48px;width:468px;height:144px;border:1px solid #a5a3a8;box-shadow:inset 1px 1px 0 #fff,1px 1px 0 #fff"></div>
  <div class="lb" style="left:25.5px;top:60.5px;transform:scaleX(1.0163);transform-origin:0 0" id="l1">Шаг съёмки между пикетами</div>
  <div class="lb" style="left:25.5px;top:84px;transform:scaleX(1.0010);transform-origin:0 0" id="l2">Шаг съёмки между профилями</div>
  <div class="lb" style="left:25.5px;top:108px;transform:scaleX(0.9998);transform-origin:0 0" id="l3">Горизонтальный масштаб карты (в 1см - ПК)</div>
  <div class="lb" style="left:25.5px;top:131.5px;transform:scaleX(1.0002);transform-origin:0 0" id="l4">Горизонтальный масштаб карты (в 1см - ПР)</div>
  <div class="lb" style="left:25.5px;top:155.5px;transform:scaleX(1.0006);transform-origin:0 0" id="l5">Вертикальный масштаб графиков (в 1см - нТл)</div>
  <div class="ef" style="left:264px;top:60px"><span style="position:absolute;left:3px;top:3px;right:4px;bottom:2px;background:#0a5cb0;color:#fff;line-height:17px;padding-right:1px">0.0000</span></div>
  <div class="ef" style="left:264px;top:84px">0.0000</div>
  <div class="ef" style="left:360px;top:108px">0.0000</div>
  <div class="ef" style="left:360px;top:132px">0.0000</div>
  <div class="ef" style="left:360px;top:156px">0.0000</div>
  <div class="pbtn sm" style="left:24px;top:216px;width:84px;height:26px;font-size:12px;line-height:26px"><u>С</u>оздать</div>
  <div class="pbtn sm" style="left:120px;top:216px;width:84px;height:26px;font-size:12px;line-height:26px"><u>О</u>тмена</div>
 </div>
</div>

<!-- status bar -->
<div class="abs" style="left:2px;top:649px;width:1154px;height:1px;background:#000"></div>
<div id="status" class="abs gray" style="left:2px;top:650px;width:1154px;height:23px;border-top:1px solid #fff">
<span style="left:2px;top:4px;transform:scaleX(0.8660);transform-origin:0 0" id="s1">Kumola_all (Zap.kymola!Kumola_all)</span><span style="left:185.2px;top:4px;transform:scaleX(0.9122);transform-origin:0 0" id="s2">Record: EOF/7122</span><span style="left:315.9px;top:4px;transform:scaleX(0.8922);transform-origin:0 0" id="s3">Exclusive</span>
<div class="abs" style="left:971px;top:-1px;width:1px;height:24px;background:#3c3c3e"></div>
<div class="sp" style="left:974px;width:28px"></div>
<div class="sp" style="left:1004px;width:30px"><span style="left:2px;top:2px;transform:scaleX(0.8862);transform-origin:0 0" id="s4">NUM</span></div>
<div class="sp" style="left:1036px;width:33px"></div>
<div class="sp" style="left:1071px;width:64px"><span style="left:5.1px;top:2px;transform:scaleX(0.8801);transform-origin:0 0" id="s5">1:58:12 pm</span></div>
<svg class="abs" style="left:1140px;top:9px" width="13" height="13" viewBox="0 0 13 13"><path d="M12 1L1 12M12 5L5 12M12 9L9 12" stroke="#a5a3a8" stroke-width="1.500"/></svg>
</div>

</body>
</html>
